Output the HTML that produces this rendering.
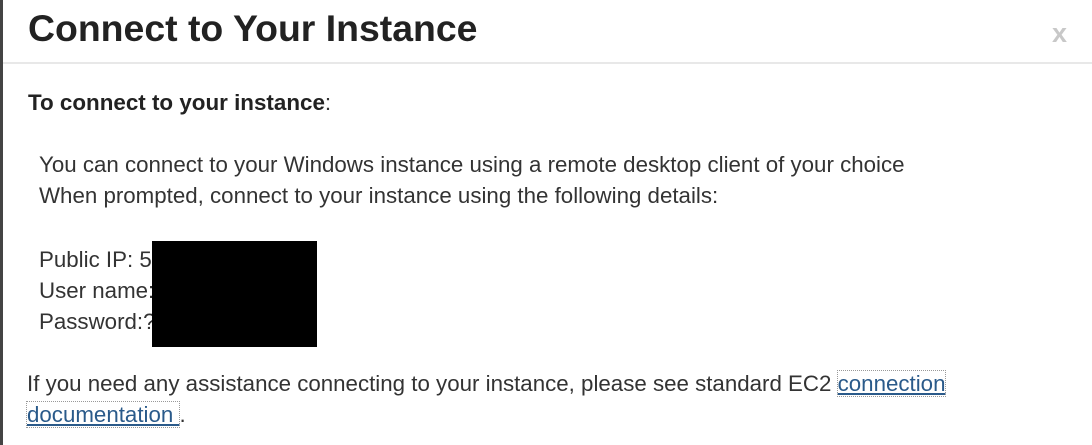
<!DOCTYPE html>
<html><head><style>
html,body{margin:0;padding:0;width:1092px;height:445px;overflow:hidden;background:#fff;font-family:"Liberation Sans",Arial,sans-serif;color:#333;}
.lb{position:absolute;left:0;top:0;width:3px;height:445px;background:#444;}
h1{position:absolute;left:28px;top:8px;margin:0;font-size:37.4px;font-weight:bold;color:#222;white-space:nowrap;line-height:40px;}
.x{position:absolute;left:1052px;top:18px;font-size:27px;font-weight:bold;color:#c8c8c8;}
.sep{position:absolute;left:3px;right:0;top:62px;height:2px;background:#e8e8e8;}
.t{position:absolute;white-space:nowrap;font-size:22.3px;line-height:31px;}
.b{font-weight:bold;color:#222;}
a{color:#2a5a8a;text-decoration:underline;outline:1px dotted #999;}
.blk{position:absolute;left:152px;top:241px;width:165px;height:106px;background:#000;}
</style></head><body>
<div class="lb"></div>
<h1>Connect to Your Instance</h1>
<div class="x">x</div>
<div class="sep"></div>
<div class="t" style="left:28px;top:87px;font-size:22.4px"><span class="b">To connect to your instance</span>:</div>
<div class="t" style="left:39px;top:149px">You can connect to your Windows instance using a remote desktop client of your choice<br>When prompted, connect to your instance using the following details:</div>
<div class="t" style="left:39px;top:244px">Public IP: 54<br>User name: <br>Password:?</div>
<div class="blk"></div>
<div class="t" style="left:27px;top:368px">If you need any assistance connecting to your instance, please see standard EC2 <a>connection</a><br><a>documentation </a>.</div>
</body></html>
